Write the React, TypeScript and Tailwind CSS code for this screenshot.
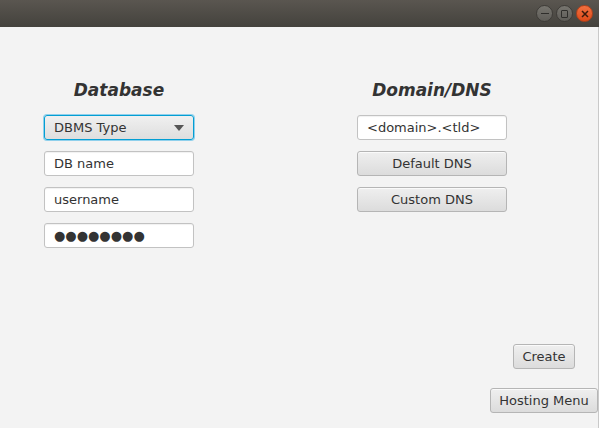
import React from "react";

const font = { fontFamily: '"DejaVu Sans", "Liberation Sans", sans-serif' };

const fieldClass =
  "h-[25px] w-[150px] rounded-[3px] border border-[#c2c2c2] bg-white px-[9px] text-[13px] leading-[24px] text-[#333] shadow-[inset_0_1px_1px_rgba(0,0,0,0.06)]";

const buttonClass =
  "h-[25px] rounded-[3px] border border-[#b5b5b5] bg-gradient-to-b from-[#efefef] to-[#dcdcdc] text-[13px] leading-[23px] text-[#333] shadow-[inset_0_1px_0_rgba(255,255,255,0.7)]";

function TitleBar() {
  return (
    <div className="flex h-[27px] items-center justify-end gap-[3px] bg-gradient-to-b from-[#5a5650] to-[#44423d] pr-[6px]">
      <div className="flex h-[17px] w-[17px] items-center justify-center rounded-full border border-[#3e3c38] bg-gradient-to-b from-[#77756f] to-[#5e5c57]">
        <div className="h-[1.5px] w-[8px] bg-[#2f2e2b]" />
      </div>
      <div className="flex h-[17px] w-[17px] items-center justify-center rounded-full border border-[#3e3c38] bg-gradient-to-b from-[#77756f] to-[#5e5c57]">
        <div className="h-[8px] w-[7px] rounded-[1px] border-[1.5px] border-[#2f2e2b]" />
      </div>
      <div className="flex h-[17px] w-[17px] items-center justify-center rounded-full border border-[#b3401a] bg-gradient-to-b from-[#f2703f] to-[#dd4a17]">
        <svg width="8" height="8" viewBox="0 0 8 8">
          <path d="M1 1 L7 7 M7 1 L1 7" stroke="#3a1a0c" strokeWidth="1.5" />
        </svg>
      </div>
    </div>
  );
}

export default function App() {
  return (
    <div className="h-[428px] w-[599px] overflow-hidden bg-[#f3f3f3]" style={font}>
      <TitleBar />
      <div className="flex h-[401px] flex-col border-r border-[#c9c9c9]">
        <div className="flex gap-[163px] pl-[44px] pt-[52px]">
          <div className="flex w-[150px] flex-col">
            <h2 className="h-[22px] text-center text-[17px] font-bold italic leading-[22px] text-[#333]">
              Database
            </h2>
            <div className="mt-[14px] flex flex-col gap-[11px]">
              <div className="flex h-[25px] w-[150px] items-center justify-between rounded-[3px] border border-[#039ed3] bg-gradient-to-b from-[#f0f0f0] to-[#dedede] pl-[9px] pr-[9px] pt-px text-[13px] text-[#333] shadow-[0_0_0_1px_#8fd0ec]">
                <span>DBMS Type</span>
                <svg width="10" height="6" viewBox="0 0 10 6">
                  <path d="M0 0 L10 0 L5 6 Z" fill="#555" />
                </svg>
              </div>
              <div className={fieldClass}>DB name</div>
              <div className={fieldClass}>username</div>
              <div className={fieldClass}>●●●●●●●●</div>
            </div>
          </div>
          <div className="flex w-[150px] flex-col">
            <h2 className="h-[22px] text-center text-[17px] font-bold italic leading-[22px] text-[#333]">
              Domain/DNS
            </h2>
            <div className="mt-[14px] flex flex-col gap-[11px]">
              <div className={fieldClass}>&lt;domain&gt;.&lt;tld&gt;</div>
              <button className={`${buttonClass} w-[150px]`}>Default DNS</button>
              <button className={`${buttonClass} w-[150px]`}>Custom DNS</button>
            </div>
          </div>
        </div>
        <div className="mt-auto flex flex-col items-end gap-[19px] pb-[15px]">
          <button className={`${buttonClass} mr-[23px] w-[62px]`}>Create</button>
          <button className={`${buttonClass} mr-0 w-[108px]`}>Hosting Menu</button>
        </div>
      </div>
    </div>
  );
}
